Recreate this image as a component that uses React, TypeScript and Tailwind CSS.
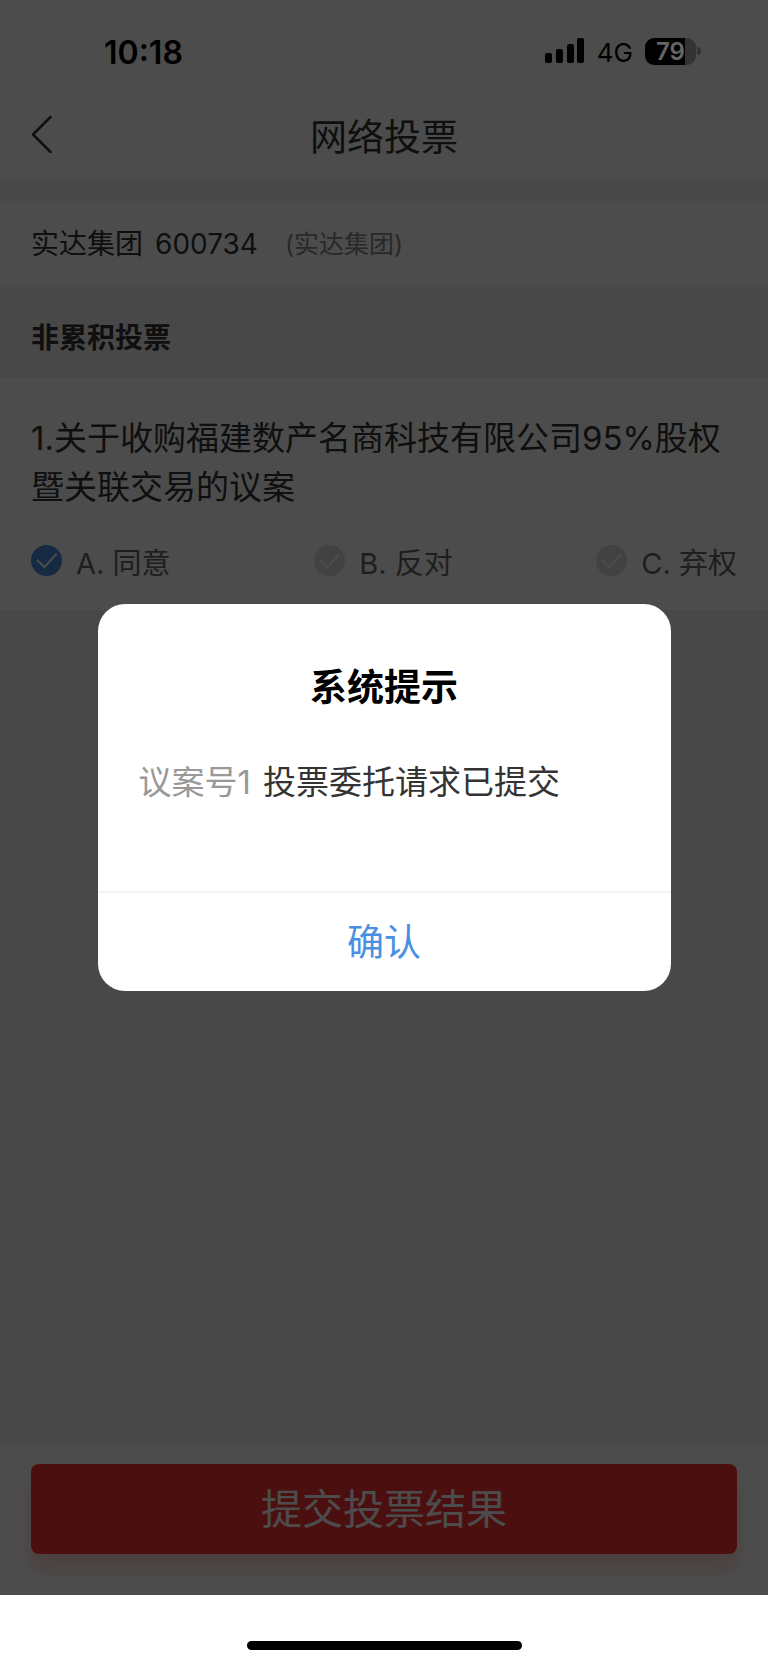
import { useState } from "react";

type Choice = { value: string; label: string };

const choices: Choice[] = [
  { value: "agree", label: "A. 同意" },
  { value: "against", label: "B. 反对" },
  { value: "abstain", label: "C. 弃权" },
];

function StatusBar() {
  return (
    <div className="relative z-20 flex h-[102px] items-center justify-between pl-[104px] pr-[67px] text-black">
      <span className="pt-1 text-[32px] leading-10 font-semibold">10:18</span>
      <div className="flex items-center gap-3">
        <svg className="h-[26px] w-10" viewBox="0 0 40 26" aria-hidden="true">
          <rect x="0" y="15" width="7" height="10" rx="2" />
          <rect x="11" y="11" width="7" height="14" rx="2" />
          <rect x="22" y="6" width="7" height="19" rx="2" />
          <rect x="32" y="0" width="7" height="25" rx="2" />
        </svg>
        <span className="pt-1 text-[26px] leading-8">4G</span>
        <div className="flex items-center gap-px">
          <div className="flex h-[27px] w-[51px] items-center justify-center rounded-[9px] bg-linear-to-r from-black from-79% to-[#333] to-79% pt-0.5 text-2xl font-semibold text-[#666]">
            79
          </div>
          <div className="h-2 w-1 rounded-r-full bg-[#333]" />
        </div>
      </div>
    </div>
  );
}

function VoteOption({
  choice,
  checked,
  onSelect,
}: {
  choice: Choice;
  checked: boolean;
  onSelect: (value: string) => void;
}) {
  return (
    <label className="flex items-center gap-[14px] text-[29px] leading-10 text-[#666]">
      <span className="mb-2 grid size-[31px] place-items-center">
        <input
          type="radio"
          name="vote"
          value={choice.value}
          checked={checked}
          onChange={() => onSelect(choice.value)}
          className="col-start-1 row-start-1 size-[31px] appearance-none rounded-full bg-[#dcdcdc] checked:bg-[#4a90e2]"
        />
        <svg
          className="pointer-events-none col-start-1 row-start-1 size-[31px]"
          viewBox="0 0 31 31"
          fill="none"
          stroke="#fff"
          strokeWidth="2"
          aria-hidden="true"
        >
          <path d="M6.5 15.5 13.5 22 25 9.5" strokeLinecap="round" />
        </svg>
      </span>
      {choice.label}
    </label>
  );
}

export default function App() {
  const [vote, setVote] = useState("agree");
  const [open, setOpen] = useState(true);

  return (
    <div className="flex min-h-screen flex-col bg-white font-['Inter','Noto_Sans_CJK_SC',sans-serif] text-[#333]">
      <div className="relative flex flex-1 flex-col bg-[#f0f0f0]">
        <header className="bg-white">
          <StatusBar />
          <div className="grid h-[79px] grid-cols-[1fr_auto_1fr] items-start px-[31px]">
            <button type="button" aria-label="返回" className="mt-[13px] justify-self-start">
              <svg
                className="h-[38px] w-6"
                viewBox="0 0 24 38"
                fill="none"
                stroke="currentColor"
                strokeWidth="2.5"
                strokeLinecap="round"
                strokeLinejoin="round"
                aria-hidden="true"
              >
                <path d="M19.5 2 2 19.5 19.5 37" />
              </svg>
            </button>
            <h1 className="mt-[10px] text-[37px] leading-[52px]">网络投票</h1>
          </div>
        </header>

        <section className="mt-5 flex h-[86px] items-center gap-[27px] bg-white px-[31px]">
          <span className="flex gap-3 text-[28px] leading-10">
            <span>实达集团</span>
            <span>600734</span>
          </span>
          <span className="text-[25px] leading-10 text-[#888]">(实达集团)</span>
        </section>

        <h2 className="h-[91px] px-[31px] pt-[31px] text-[28px] leading-10 font-bold">
          非累积投票
        </h2>

        <section className="flex flex-col gap-8 bg-white px-[31px] pt-9 pb-[26px]">
          <p className="text-[33px] leading-[49px]">
            1.关于收购福建数产名商科技有限公司95%股权暨关联交易的议案
          </p>
          <div className="flex justify-between">
            {choices.map((choice) => (
              <VoteOption
                key={choice.value}
                choice={choice}
                checked={vote === choice.value}
                onSelect={setVote}
              />
            ))}
          </div>
        </section>

        <footer className="mt-auto bg-white px-[31px] pt-[21px] pb-[41px]">
          <button
            type="button"
            className="h-[90px] w-full rounded-lg bg-[#fd3532] pt-0.5 text-[41px] text-white shadow-[0_16px_20px_rgba(253,53,50,0.22)]"
            onClick={() => setOpen(true)}
          >
            提交投票结果
          </button>
        </footer>

        {open && (
          <div className="absolute inset-0 z-10 flex items-center justify-center bg-black/70 px-[97px]">
            <div
              role="dialog"
              aria-modal="true"
              aria-labelledby="notice-title"
              className="flex w-full max-w-[573px] flex-col overflow-hidden rounded-[27px] bg-white"
            >
              <h2
                id="notice-title"
                className="pt-[58px] text-center text-[37px] leading-[52px] font-bold text-black"
              >
                系统提示
              </h2>
              <p className="flex gap-3 px-[41px] pt-11 pb-[84px] text-[33px] leading-[49px]">
                <span className="text-[#999]">议案号1</span>
                <span>投票委托请求已提交</span>
              </p>
              <button
                type="button"
                className="h-[100px] border-t-2 border-[#f5f5f5] pt-0.5 text-[37px] text-[#4a90e2]"
                onClick={() => setOpen(false)}
              >
                确认
              </button>
            </div>
          </div>
        )}
      </div>

      <div className="flex h-[70px] justify-center pt-[46px]">
        <div className="h-[9px] w-[275px] rounded-full bg-black" />
      </div>
    </div>
  );
}
